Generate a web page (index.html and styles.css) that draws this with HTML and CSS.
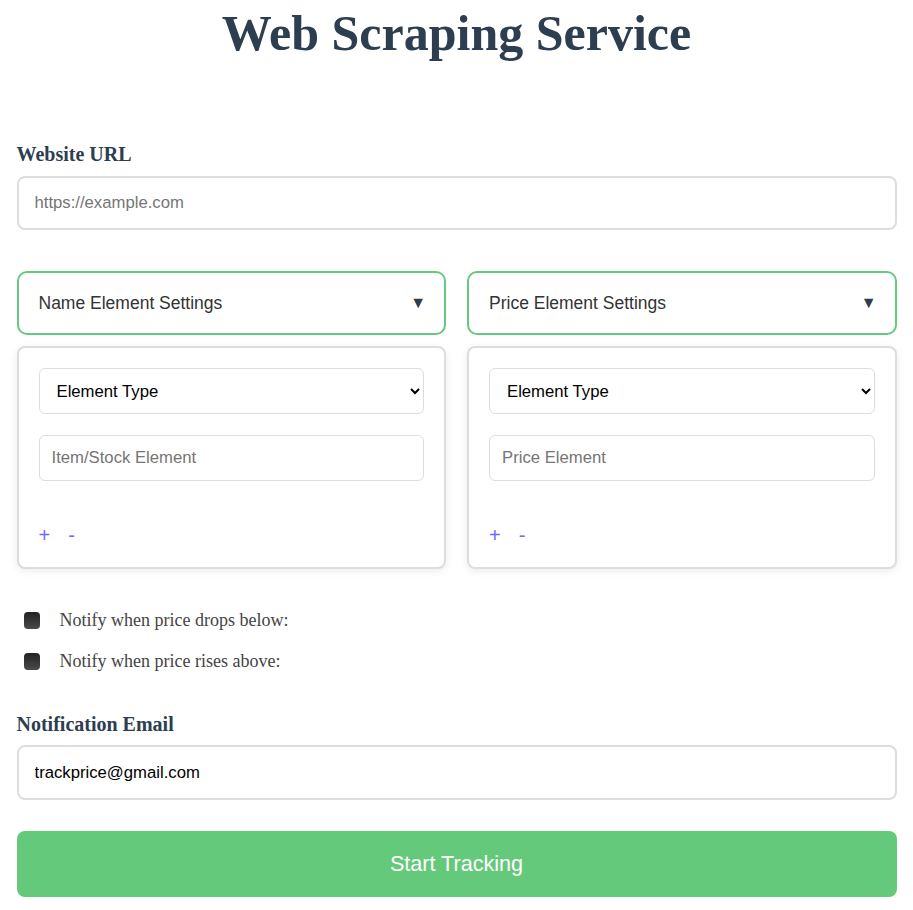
FILE: index.html
```html
<!DOCTYPE html>
<html lang="en">
<head>
<meta charset="utf-8">
<title>Web Scraping Service</title>
<link rel="stylesheet" href="styles.css">
</head>
<body>
<div class="container">
  <h1 class="title">Web Scraping Service</h1>
  <form class="form">
    <label class="field-label" for="url">Website URL</label>
    <input class="text-input" id="url" type="text" placeholder="https://example.com">

    <div class="columns">
      <div class="column">
        <div class="settings-header">
          <span>Name Element Settings</span>
          <span class="caret">&#9660;</span>
        </div>
        <div class="settings-panel">
          <select class="panel-select">
            <option>Element Type</option>
          </select>
          <input class="panel-input" type="text" placeholder="Item/Stock Element">
          <div class="panel-actions">
            <span class="action">+</span>
            <span class="action">-</span>
          </div>
        </div>
      </div>
      <div class="column">
        <div class="settings-header">
          <span>Price Element Settings</span>
          <span class="caret">&#9660;</span>
        </div>
        <div class="settings-panel">
          <select class="panel-select">
            <option>Element Type</option>
          </select>
          <input class="panel-input" type="text" placeholder="Price Element">
          <div class="panel-actions">
            <span class="action">+</span>
            <span class="action">-</span>
          </div>
        </div>
      </div>
    </div>

    <div class="checks">
      <label class="check-row"><span class="check-box"></span>Notify when price drops below:</label>
      <label class="check-row"><span class="check-box"></span>Notify when price rises above:</label>
    </div>

    <label class="field-label email-label" for="email">Notification Email</label>
    <input class="text-input email-input" id="email" type="text" value="trackprice@gmail.com">

    <button class="submit" type="button">Start Tracking</button>
  </form>
</div>
</body>
</html>
```

FILE: styles.css
```css
* { box-sizing: border-box; }

body {
  margin: 0;
  background: #ffffff;
  font-family: "Liberation Serif", "Times New Roman", serif;
  color: #2c3e50;
}

.container {
  width: 880px;
  margin: 0 auto;
}

.title {
  margin: 4px 0 0;
  font-size: 50px;
  line-height: 58px;
  font-weight: bold;
  text-align: center;
  color: #2c3e50;
}

.form {
  display: flex;
  flex-direction: column;
  margin-top: 80px;
}

.field-label {
  display: block;
  font-size: 20px;
  line-height: 24px;
  font-weight: bold;
  color: #2c3e50;
  margin-bottom: 10px;
}

.text-input {
  display: block;
  width: 100%;
  height: 54px;
  padding: 0 16px;
  border: 2px solid #dddddd;
  border-radius: 8px;
  font-family: "Liberation Sans", Arial, sans-serif;
  font-size: 16.7px;
  color: #000;
  background: #fff;
  outline: none;
}

.text-input::placeholder,
.panel-input::placeholder {
  color: #757575;
}

.columns {
  display: grid;
  grid-template-columns: 1fr 1fr;
  column-gap: 21px;
  margin-top: 41px;
}

.settings-header {
  display: flex;
  align-items: center;
  justify-content: space-between;
  height: 64px;
  padding: 0 18px 0 20px;
  border: 2px solid #66c97e;
  border-radius: 10px;
  font-family: "Liberation Sans", Arial, sans-serif;
  font-size: 17.5px;
  color: #333333;
}

.caret {
  font-size: 16px;
  color: #2c3e50;
}

.settings-panel {
  margin-top: 11px;
  padding: 20px 20px 20px;
  border: 2px solid #dddddd;
  border-radius: 8px;
  box-shadow: 0 2px 8px rgba(0, 0, 0, 0.08);
  background: #fff;
}

.panel-select {
  display: block;
  width: 100%;
  height: 46px;
  padding: 0 13px;
  border: 1px solid #dddddd;
  border-radius: 6px;
  background: #fff;
  font-family: "Liberation Sans", Arial, sans-serif;
  font-size: 16.7px;
  color: #000;
}

.panel-input {
  display: block;
  width: 100%;
  height: 46px;
  margin-top: 21px;
  padding: 0 12px;
  border: 1px solid #dddddd;
  border-radius: 6px;
  font-family: "Liberation Sans", Arial, sans-serif;
  font-size: 16.7px;
  outline: none;
}

.panel-actions {
  display: flex;
  gap: 18px;
  margin-top: 42px;
  height: 24px;
  align-items: center;
  font-family: "Liberation Sans", Arial, sans-serif;
  font-size: 20px;
  line-height: 24px;
  color: #6b6bff;
}

.checks {
  display: flex;
  flex-direction: column;
  gap: 17px;
  margin-top: 39px;
}

.check-row {
  display: flex;
  align-items: center;
  gap: 20px;
  height: 24px;
  padding-left: 7px;
  font-size: 18px;
  color: #444444;
}

.check-box {
  width: 16px;
  height: 17px;
  border-radius: 4px;
  background: linear-gradient(#222222, #4a4a4a);
}

.email-label {
  margin-top: 39px;
  margin-bottom: 9px;
}

.email-input {
  height: 55px;
}

.submit {
  margin-top: 31px;
  height: 66px;
  width: 100%;
  border: none;
  border-radius: 8px;
  background: #64c97a;
  color: #ffffff;
  font-family: "Liberation Sans", Arial, sans-serif;
  font-size: 21.6px;
}
```
